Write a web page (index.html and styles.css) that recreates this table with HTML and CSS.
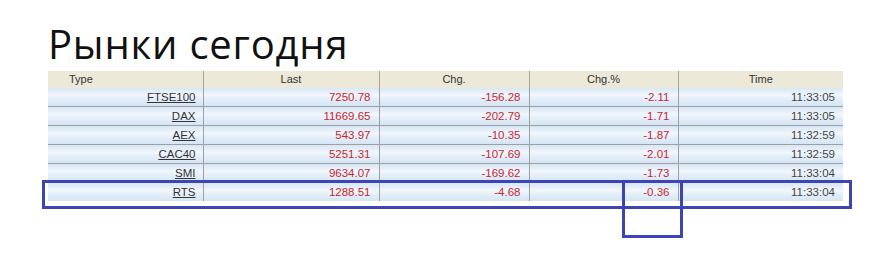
FILE: index.html
```html
<!DOCTYPE html>
<html lang="ru">
<head>
<meta charset="utf-8">
<title>Рынки сегодня</title>
<link rel="stylesheet" href="styles.css">
</head>
<body>
<div class="page">
  <h1 class="title">Рынки сегодня</h1>
  <table class="markets">
    <colgroup>
      <col class="c-type">
      <col class="c-last">
      <col class="c-chg">
      <col class="c-pct">
      <col class="c-time">
    </colgroup>
    <thead>
      <tr>
        <th>Type</th>
        <th>Last</th>
        <th>Chg.</th>
        <th>Chg.%</th>
        <th>Time</th>
      </tr>
    </thead>
    <tbody>
      <tr><td><a href="#">FTSE100</a></td><td class="neg">7250.78</td><td class="neg">-156.28</td><td class="neg">-2.11</td><td>11:33:05</td></tr>
      <tr><td><a href="#">DAX</a></td><td class="neg">11669.65</td><td class="neg">-202.79</td><td class="neg">-1.71</td><td>11:33:05</td></tr>
      <tr><td><a href="#">AEX</a></td><td class="neg">543.97</td><td class="neg">-10.35</td><td class="neg">-1.87</td><td>11:32:59</td></tr>
      <tr><td><a href="#">CAC40</a></td><td class="neg">5251.31</td><td class="neg">-107.69</td><td class="neg">-2.01</td><td>11:32:59</td></tr>
      <tr><td><a href="#">SMI</a></td><td class="neg">9634.07</td><td class="neg">-169.62</td><td class="neg">-1.73</td><td>11:33:04</td></tr>
      <tr class="last"><td><a href="#">RTS</a></td><td class="neg">1288.51</td><td class="neg">-4.68</td><td class="neg">-0.36</td><td>11:33:04</td></tr>
    </tbody>
  </table>
  <div class="mark mark-row"></div>
  <div class="mark mark-cell"></div>
</div>
</body>
</html>
```

FILE: styles.css
```css
html, body {
  margin: 0;
  padding: 0;
  background: #ffffff;
}

.page {
  position: relative;
  width: 876px;
  height: 269px;
  padding: 0 0 0 48px;
  box-sizing: border-box;
}

.title {
  margin: 0;
  padding-top: 21px;
  height: 71px;
  box-sizing: border-box;
  font-family: "Open Sans", "Noto Sans", sans-serif;
  font-weight: 400;
  font-size: 40px;
  line-height: 46px;
  color: #111111;
  letter-spacing: 0.8px;
  white-space: nowrap;
}

.markets {
  width: 795px;
  border-collapse: collapse;
  table-layout: fixed;
  font-family: "Liberation Sans", Arial, sans-serif;
  font-size: 11.5px;
}

.c-type { width: 155px; }
.c-last { width: 176px; }
.c-chg { width: 150px; }
.c-pct { width: 149px; }
.c-time { width: 165px; }

.markets th {
  height: 17px;
  padding: 0;
  background: #ece9d8;
  color: #333333;
  font-weight: 400;
  font-size: 11px;
  text-align: center;
  border-left: 1px solid #a7a59b;
  line-height: 17px;
}

.markets th:first-child {
  border-left: none;
  text-align: left;
  padding-left: 21px;
}

.markets td {
  height: 18px;
  padding: 0 8px 0 0;
  text-align: right;
  color: #444444;
  line-height: 18px;
  border-left: 1px solid #a0a0a0;
  border-bottom: 1px solid #a0a0a0;
  background: linear-gradient(to bottom, #d9e7f5 0%, #e4eef9 20%, #f2f7fc 38%, #e6f0fa 55%, #d3e4f4 100%);
}

.markets td:first-child {
  border-left: none;
  padding-right: 7px;
}

.markets tr.last td {
  border-bottom: none;
}

.markets a {
  color: #333333;
  text-decoration: underline;
}

.markets td.neg {
  color: #c8262e;
}

.mark {
  position: absolute;
  border: 3px solid #3d45b3;
  box-sizing: border-box;
}

.mark-row {
  left: 42px;
  top: 180px;
  width: 810px;
  height: 29px;
}

.mark-cell {
  left: 622px;
  top: 180px;
  width: 61px;
  height: 58px;
}
```
